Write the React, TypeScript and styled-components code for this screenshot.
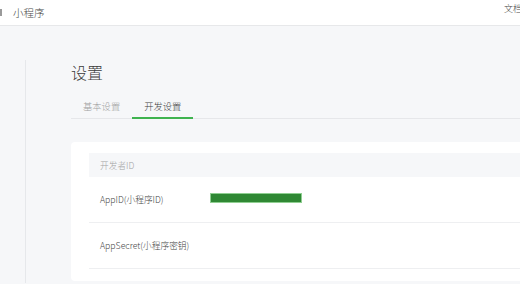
import styled, { createGlobalStyle } from 'styled-components';

const Global = createGlobalStyle`
  html, body {
    margin: 0;
    padding: 0;
    overflow: hidden;
    background: #fff;
    font-family: "Noto Sans CJK SC", "Noto Sans", sans-serif;
    font-weight: 300;
    color: #353535;
  }
`;

const Page = styled.div`
  width: 540px;
`;

const Header = styled.header`
  height: 25px;
  display: flex;
  justify-content: space-between;
  border-bottom: 1px solid #e7e8ea;
  background: #fff;
`;

const Brand = styled.div`
  display: flex;
  align-items: center;
  font-size: 10.5px;
  line-height: 12px;
  color: #4a4a4a;
`;

const BrandBar = styled.span`
  width: 2px;
  height: 7px;
  margin-right: 11px;
  background: #9a9a9a;
`;

const HeaderLink = styled.a`
  padding: 3px 18px 0 0;
  font-size: 9px;
  line-height: 11px;
  color: #4a4a4a;
  text-decoration: none;
`;

const Body = styled.div`
  height: 258px;
  box-sizing: border-box;
  padding: 34px 0 0 25px;
  background: #f6f7f9;
`;

const Panel = styled.main`
  height: 223px;
  overflow: hidden;
  box-sizing: border-box;
  padding-left: 45px;
  border-left: 1px solid #e6e8eb;
`;

const Title = styled.h1`
  margin: 4px 0 0;
  font-size: 16px;
  line-height: 16px;
  font-weight: 300;
  color: #3a3a3a;
`;

const TabBar = styled.div`
  display: flex;
  margin-top: 16px;
  border-bottom: 1px solid #e6e7ea;
`;

const Tab = styled.div<{ $active?: boolean }>`
  padding: 3px 12px 4px;
  margin-bottom: -1px;
  font-size: 9.3px;
  line-height: 14px;
  color: ${(p) => (p.$active ? '#404040' : '#a0a0a0')};
  border-bottom: 2px solid ${(p) => (p.$active ? '#3fb34f' : 'transparent')};
`;

const Card = styled.section`
  margin-top: 23px;
  padding: 11px 0 12px 18px;
  background: #fff;
  border-radius: 4px;
`;

const CardHead = styled.div`
  height: 24px;
  display: flex;
  align-items: center;
  padding-left: 11px;
  background: #f6f7f9;
  font-size: 8.7px;
  color: #a3a3a3;
`;

const Row = styled.div`
  height: 45px;
  display: flex;
  align-items: center;
  padding-left: 11px;
  border-bottom: 1px solid #eeeff1;
  font-size: 8.7px;
  color: #444;
`;

const Label = styled.div`
  width: 111px;
  flex: none;
`;

const Masked = styled.div<{ $w: number }>`
  width: ${(p) => p.$w}px;
  height: 8px;
  margin-bottom: 4px;
  background: #2f8834;
  box-shadow: 0 0 0 1px #8fcf91;
`;

export default function App() {
  return (
    <Page>
      <Global />
      <Header>
        <Brand>
          <BrandBar />
          小程序
        </Brand>
        <HeaderLink>文档</HeaderLink>
      </Header>
      <Body>
        <Panel>
          <Title>设置</Title>
          <TabBar>
            <Tab>基本设置</Tab>
            <Tab $active>开发设置</Tab>
          </TabBar>
          <Card>
            <CardHead>开发者ID</CardHead>
            <Row>
              <Label>AppID(小程序ID)</Label>
              <Masked $w={90} />
            </Row>
            <Row>
              <Label>AppSecret(小程序密钥)</Label>
            </Row>
          </Card>
        </Panel>
      </Body>
    </Page>
  );
}
